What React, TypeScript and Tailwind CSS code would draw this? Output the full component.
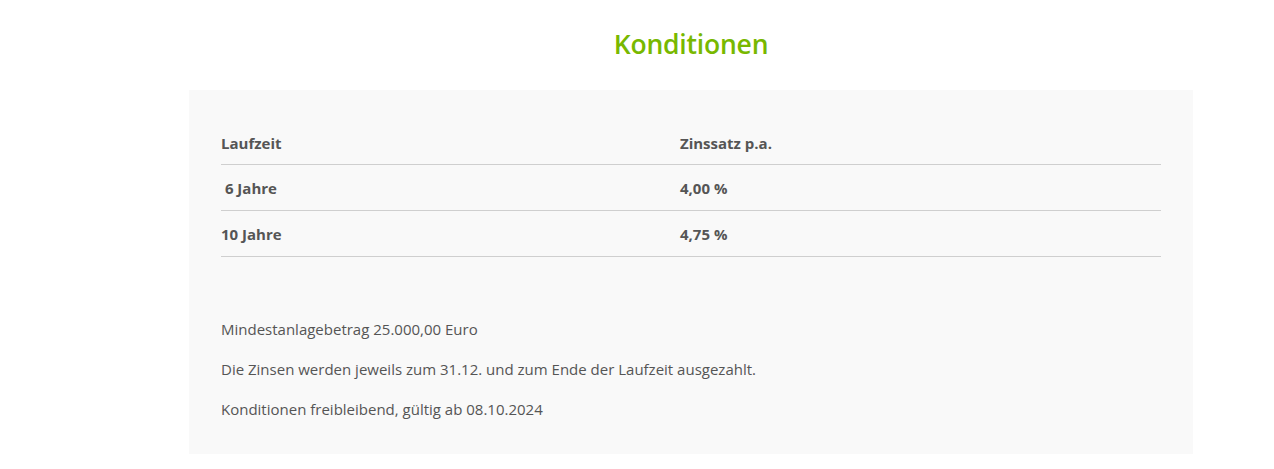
const rows = [
  { laufzeit: "\u00a06 Jahre", zins: "4,00 %" },
  { laufzeit: "10 Jahre", zins: "4,75 %" },
];

const notes = [
  "Mindestanlagebetrag 25.000,00 Euro",
  "Die Zinsen werden jeweils zum 31.12. und zum Ende der Laufzeit ausgezahlt.",
  "Konditionen freibleibend, gültig ab 08.10.2024",
];

export default function App() {
  return (
    <div className="min-h-[469px] bg-white font-['Open_Sans','Noto_Sans',sans-serif] text-[#555]">
      <div className="ml-[189px] w-[1004px]">
        <h2 className="pt-[26px] h-[90px] text-center text-[26.5px] font-semibold tracking-[-0.2px] text-[#78b800] leading-[36px]">
          Konditionen
        </h2>
        <div className="bg-[#f9f9f9] px-8 pt-[31px] pb-[33px]">
          <div className="grid grid-cols-[459px_1fr] text-[15px] font-bold leading-5">
            <div className="h-[44px] flex items-center border-b border-[#cfcfcf]">Laufzeit</div>
            <div className="h-[44px] flex items-center border-b border-[#cfcfcf]">Zinssatz p.a.</div>
            {rows.map((r) => (
              <div key={r.laufzeit} className="contents">
                <div className="h-[46px] flex items-center border-b border-[#cfcfcf] whitespace-pre">{r.laufzeit}</div>
                <div className="h-[46px] flex items-center border-b border-[#cfcfcf]">{r.zins}</div>
              </div>
            ))}
          </div>
          <div className="mt-[60px] flex flex-col gap-4 text-[15px] leading-6">
            {notes.map((n) => (
              <p key={n}>{n}</p>
            ))}
          </div>
        </div>
      </div>
    </div>
  );
}
